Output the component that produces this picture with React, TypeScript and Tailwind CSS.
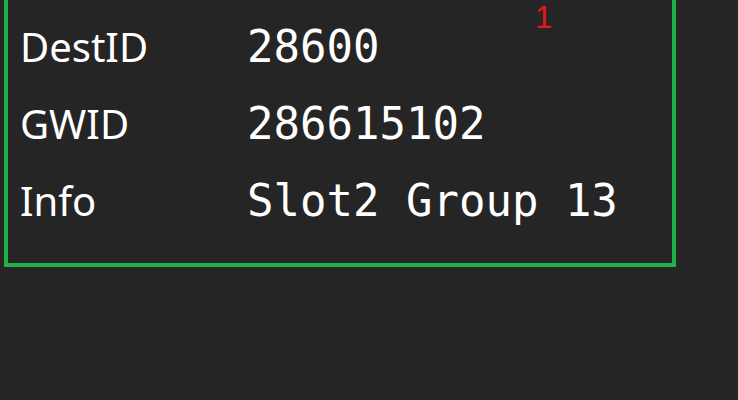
const rows = [
  { label: "DestID", value: "28600" },
  { label: "GWID", value: "286615102" },
  { label: "Info", value: "Slot2 Group 13" },
];

export default function App() {
  return (
    <div className="h-[400px] w-[738px] overflow-hidden bg-[#252525]">
      <div className="relative ml-[4px] w-[672px] border-x-4 border-b-4 border-[#1fb04a] pb-[24px] pl-[12px] pt-[8px]">
        <span className="absolute left-[527px] top-0 font-['Liberation_Sans',sans-serif] text-[31px] leading-[36px] text-[#e8161d]">
          1
        </span>
        {rows.map((row) => (
          <div key={row.label} className="flex h-[77px] items-baseline">
            <div className="w-[227px] font-['Noto_Sans',sans-serif] text-[40px] leading-[77px] text-white">
              {row.label}
            </div>
            <div className="font-['DejaVu_Sans_Mono',monospace] text-[44px] leading-[77px] text-white">
              {row.value}
            </div>
          </div>
        ))}
      </div>
    </div>
  );
}
